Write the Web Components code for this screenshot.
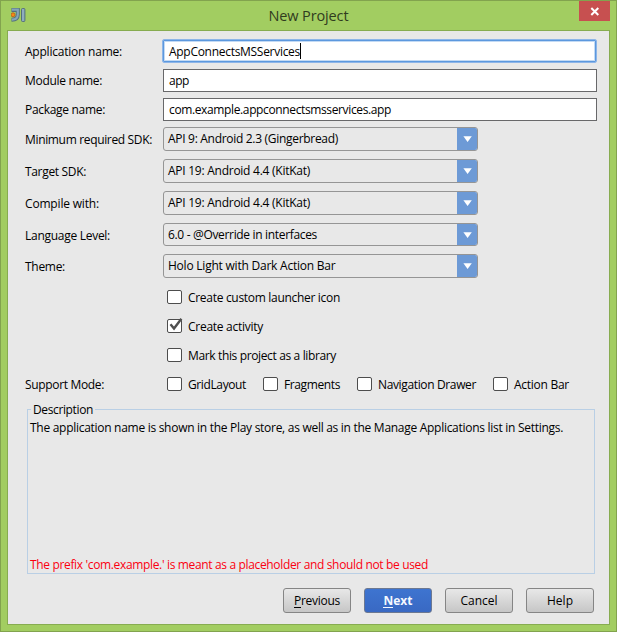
<!DOCTYPE html>
<html lang="en"><head><meta charset="utf-8"><title>New Project</title>
<style>html,body{margin:0;width:617px;height:632px;overflow:hidden}</style></head>
<body>
<project-dialog></project-dialog>
<script>
const define = (name, html, setup) => customElements.define(name, class extends HTMLElement {
  connectedCallback() {
    if (this.shadowRoot) return;
    const t = document.createElement('template');
    t.innerHTML = html;
    this.attachShadow({mode: 'open'}).append(t.content.cloneNode(true));
    if (setup) setup(this, this.shadowRoot);
  }
});
const attr = (el, n) => el.getAttribute(n) || '';

/* Single line of text, tracked to fill the width given in "w". */
define('fit-text', `<style>:host{display:flow-root;white-space:pre;line-height:16px;height:17px}span{display:block;width:max-content;margin-top:1px;height:16px;line-height:16px}u{text-decoration:none;box-shadow:0 1px 0 currentColor;display:inline-block;height:14px;line-height:16px;vertical-align:top}</style><span></span>`, (el, root) => {
  const s = root.querySelector('span'), text = attr(el, 'text'), w = +attr(el, 'w');
  s.textContent = text;
  const spacing = (w - s.getBoundingClientRect().width) / text.length;
  s.style.letterSpacing = spacing.toFixed(4) + 'px';
  if (el.hasAttribute('mnemonic')) {
    s.textContent = '';
    const u = document.createElement('u');
    u.textContent = text[0];
    s.append(u, text.slice(1));
  }
});

define('form-label', `<style>:host{display:block;padding-top:4px}:host([up="1"]){padding-top:3px}:host([up="5"]){margin-top:-1px;padding-top:0}</style><fit-text></fit-text>`, (el, root) => {
  const f = root.querySelector('fit-text');
  f.replaceWith(Object.assign(document.createElement('template'), {innerHTML: `<fit-text text="${attr(el,'text')}" w="${attr(el,'w')}"></fit-text>`}).content);
});

define('text-field', `<style>
:host{display:flex;box-sizing:border-box;width:434px;height:23px;border:1px solid #68686a;background:#fff;padding:2px 0 0 5px}
:host([focused]){width:435px;height:24px;margin-left:-1px;border:1px solid #8db5e8;border-radius:2px;padding:3px 0 0 6px;box-shadow:inset 0 0 0 1px #5c98de,inset 0 0 0 2px #c3daf4}
i{display:none;width:1px;height:16px;background:#000;margin-top:0}
:host([focused]) i{display:block}
</style><slot></slot><i></i>`);

define('combo-box', `<style>
:host{display:flex;justify-content:space-between;box-sizing:border-box;width:315px;height:24px;border:1px solid #959595;border-radius:3px;overflow:hidden;padding-left:4px}
:host([short]){height:23px}
.t{padding-top:2px}
.a{width:20px;background:#6d9ad6;display:flex}
svg{display:block}
</style><div class="t"><slot></slot></div><div class="a"><svg width="20" height="22"><path d="M6.4 8.2h8.4L10.6 14z" fill="#fff"/></svg></div>`);

define('check-box', `<style>
:host{display:flex}
svg{display:block;margin-left:4px;flex:none;overflow:visible}
slot{display:block;margin:-1px 0 0 6px}
path{display:none}
:host([checked]) path{display:block}
</style><svg width="15" height="14"><rect x=".5" y=".5" width="14" height="13" rx="1.5" fill="#fff" stroke="#4d4d4d"/><path d="M3.5 5.3L7 9.5L14.4 -.3" fill="none" stroke="#505050" stroke-width="2.4"/></svg><slot></slot>`);

define('push-button', `<style>
:host{display:flex;justify-content:center;box-sizing:border-box;width:68px;height:25px;border:1px solid #858585;border-radius:3px;background:linear-gradient(#e8e8e8,#c6c6c6);padding-top:3px}
:host([primary]){background:linear-gradient(#3e74d0,#3969c3);border-color:#6c7891;color:#f4f8ff;font-weight:bold}
</style><slot></slot>`);

define('group-box', `<style>
:host{display:grid;grid-template-rows:16px 1fr 16px;box-sizing:border-box;width:568px;height:165px;border:1px solid #b9cfe5;padding:0 0 1px 2px}
.l{justify-self:start;background:#e8e8e8;margin:-9px 0 0 1px;padding:0 2px;height:17px}
</style><div class="l"><slot name="legend"></slot></div><div><slot></slot></div><slot name="warning"></slot>`);

define('title-bar', `<style>
:host{display:grid;grid-template-columns:1fr auto 1fr;height:29px}
.logo{padding:7px 0 0 10px}svg{display:block}
.t{padding-top:6px;font-size:14.5px;color:#303c1e}
.c{justify-self:end;margin-right:6px;width:31px;height:20px;background:#c75050}
</style><div class="logo"><svg width="17" height="16" viewBox="0 0 17 16"><path d="M.5 2H6.8V6.5Q6.8 11.8 .5 11.8" fill="none" stroke="#526f7c" stroke-width="4"/><path d="M1 1.7H6.8V6.5Q6.8 11.6 1 11.6" fill="none" stroke="#84a5b9" stroke-width="2.2"/><rect x="10.5" y=".5" width="3.4" height="13" rx="1" fill="#8eacbf" stroke="#526f7c"/><circle cx="2" cy="6.8" r="2" fill="#f68a14" stroke="#b8561c" stroke-width=".8"/></svg></div>
<div class="t"><fit-text text="New Project" w="80"></fit-text></div>
<div class="c"><svg width="31" height="20"><path d="M12.3 7L19.3 14M19.3 7L12.3 14" stroke="#fff" stroke-width="2"/></svg></div>`);

const label = (t, w, up = '') => `<form-label text="${t}" w="${w}" up="${up}"></form-label>`;
const text = (t, w, extra = '') => `<fit-text text="${t}" w="${w}" ${extra}></fit-text>`;
const combo = (t, w, extra = '') => `<combo-box ${extra}>${text(t, w)}</combo-box>`;
const check = (t, w, extra = '') => `<check-box ${extra}>${text(t, w)}</check-box>`;

define('project-dialog', `<style>
:host{display:block;box-sizing:border-box;width:617px;height:632px;border:1px solid #82a34e;background:#a2cd61;font:12px "Open Sans","Noto Sans",sans-serif;color:#000}
.panel{box-sizing:border-box;margin:0 6px;width:603px;height:595px;border:1px solid #87ac50;background:#e8e8e8;padding:8px 0 0 17px}
.form{display:grid;grid-template-columns:138px 1fr;grid-template-rows:30px 29px 29px 32px 32px 32px 31px 36px 29px 29px 29px 32px;align-items:start}
.checks{display:grid;grid-template-columns:96px 94px 136px auto}
check-box{grid-column:2}.checks check-box{grid-column:auto}
group-box{margin-left:2px}
.buttons{display:flex;gap:13px;justify-content:flex-end;margin:14px 15px 0 0}
.warn{color:#fb0010}
</style>
<title-bar></title-bar>
<div class="panel">
<div class="form">
${label('Application name:',97)}<text-field focused>${text('AppConnectsMSServices',131)}</text-field>
${label('Module name:',77,'1')}<text-field>${text('app',20)}</text-field>
${label('Package name:',80,'1')}<text-field>${text('com.example.appconnectsmsservices.app',222)}</text-field>
${label('Minimum required SDK:',127)}${combo('API 9: Android 2.3 (Gingerbread)',170)}
${label('Target SDK:',61)}${combo('API 19: Android 4.4 (KitKat)',142)}
${label('Compile with:',74)}${combo('API 19: Android 4.4 (KitKat)',142)}
${label('Language Level:',85)}${combo('6.0 - @Override in interfaces',149,'short')}
${label('Theme:',40)}${combo('Holo Light with Dark Action Bar',167.5)}
${check('Create custom launcher icon',152)}
${check('Create activity',75,'checked')}
${check('Mark this project as a library',148)}
${label('Support Mode:',79,'5')}<div class="checks">${check('GridLayout',58)}${check('Fragments',56)}${check('Navigation Drawer',98)}${check('Action Bar',55)}</div>
</div>
<group-box>${text('Description',60,'slot="legend"')}${text('The application name is shown in the Play store, as well as in the Manage Applications list in Settings.',533,'style="margin-top:-7px"')}${text("The prefix 'com.example.' is meant as a placeholder and should not be used",398,'slot="warning" class="warn"')}</group-box>
<div class="buttons"><push-button>${text('Previous',46,'mnemonic')}</push-button><push-button primary>${text('Next',29,'mnemonic')}</push-button><push-button>${text('Cancel',37)}</push-button><push-button>${text('Help',26)}</push-button></div>
</div>`);
</script>
</body></html>
